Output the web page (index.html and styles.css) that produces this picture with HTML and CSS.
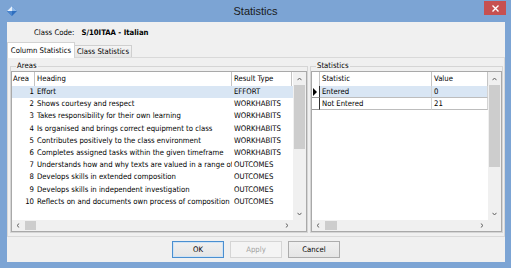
FILE: index.html
```html
<!DOCTYPE html>
<html>
<head>
<meta charset="utf-8">
<link rel="stylesheet" href="styles.css">
</head>
<body>
<div class="window">
  <div class="titlebar">
    <svg class="app-icon" viewBox="0 0 10 10" width="10" height="10">
      <polygon points="5,0 10,5 5,10 0,5" fill="#2f6fbf"/>
      <polygon points="5,0 0,5 5,5" fill="#e4eefa"/>
      <polygon points="5,0 10,5 5,5" fill="#8fb8e6"/>
      <polygon points="0,5 5,10 5,5" fill="#4a86cf"/>
    </svg>
    <div class="title">Statistics</div>
    <div class="close">
      <svg viewBox="0 0 7 7" width="7" height="7"><path d="M0.5 0.5 L6.5 6.5 M6.5 0.5 L0.5 6.5" stroke="#fff" stroke-width="1.4"/></svg>
    </div>
  </div>
  <div class="client">
    <div class="info"><span>Class Code:</span><span class="code">S/10ITAA - Italian</span></div>
    <div class="tabs">
      <div class="tab active">Column Statistics</div>
      <div class="tab inactive">Class Statistics</div>
    </div>
    <div class="panel">
      <fieldset class="group areas">
        <legend>Areas</legend>
        <div class="list">
          <div class="table">
            <div class="hdr acols"><div class="c num-h">Area</div><div class="c">Heading</div><div class="c">Result Type</div></div>
            <div class="row acols sel"><div class="c num">1</div><div class="c">Effort</div><div class="c">EFFORT</div></div>
            <div class="row acols"><div class="c num">2</div><div class="c">Shows courtesy and respect</div><div class="c">WORKHABITS</div></div>
            <div class="row acols"><div class="c num">3</div><div class="c">Takes responsibility for their own learning</div><div class="c">WORKHABITS</div></div>
            <div class="row acols"><div class="c num">4</div><div class="c">Is organised and brings correct equipment to class</div><div class="c">WORKHABITS</div></div>
            <div class="row acols"><div class="c num">5</div><div class="c">Contributes positively to the class environment</div><div class="c">WORKHABITS</div></div>
            <div class="row acols"><div class="c num">6</div><div class="c">Completes assigned tasks within the given timeframe</div><div class="c">WORKHABITS</div></div>
            <div class="row acols"><div class="c num">7</div><div class="c">Understands how and why texts are valued in a range of contexts</div><div class="c">OUTCOMES</div></div>
            <div class="row acols"><div class="c num">8</div><div class="c">Develops skills in extended composition</div><div class="c">OUTCOMES</div></div>
            <div class="row acols"><div class="c num">9</div><div class="c">Develops skills in independent investigation</div><div class="c">OUTCOMES</div></div>
            <div class="row acols"><div class="c num">10</div><div class="c">Reflects on and documents own process of composition</div><div class="c">OUTCOMES</div></div>
          </div>
          <div class="vscroll">
            <div class="arrow"><svg viewBox="0 0 5 4" width="5" height="4"><path d="M0.5 3.2 L2.5 1 L4.5 3.2" fill="none" stroke="#606060"/></svg></div>
            <div class="vthumb a-vthumb"></div>
            <div class="track"></div>
            <div class="arrow"><svg viewBox="0 0 5 4" width="5" height="4"><path d="M0.5 0.8 L2.5 3 L4.5 0.8" fill="none" stroke="#606060"/></svg></div>
          </div>
          <div class="hscroll">
            <div class="harrow"><svg viewBox="0 0 4 5" width="4" height="5"><path d="M3.2 0.5 L1 2.5 L3.2 4.5" fill="none" stroke="#606060"/></svg></div>
            <div class="hthumb"></div>
            <div class="track"></div>
            <div class="harrow"><svg viewBox="0 0 4 5" width="4" height="5"><path d="M0.8 0.5 L3 2.5 L0.8 4.5" fill="none" stroke="#606060"/></svg></div>
          </div>
          <div class="corner"></div>
        </div>
      </fieldset>
      <fieldset class="group stats">
        <legend>Statistics</legend>
        <div class="list">
          <div class="table">
            <div class="hdr scols"><div class="c rh"></div><div class="c">Statistic</div><div class="c">Value</div></div>
            <div class="srow scols sel"><div class="c rh"><svg viewBox="0 0 4 8" width="4" height="8"><polygon points="0,0 4,4 0,8" fill="#000"/></svg></div><div class="c">Entered</div><div class="c">0</div></div>
            <div class="srow scols"><div class="c rh"></div><div class="c">Not Entered</div><div class="c">21</div></div>
          </div>
          <div class="vscroll">
            <div class="arrow"><svg viewBox="0 0 5 4" width="5" height="4"><path d="M0.5 3.2 L2.5 1 L4.5 3.2" fill="none" stroke="#606060"/></svg></div>
            <div class="vthumb s-vthumb"></div>
            <div class="track"></div>
            <div class="arrow"><svg viewBox="0 0 5 4" width="5" height="4"><path d="M0.5 0.8 L2.5 3 L4.5 0.8" fill="none" stroke="#606060"/></svg></div>
          </div>
          <div class="hscroll">
            <div class="harrow"><svg viewBox="0 0 4 5" width="4" height="5"><path d="M3.2 0.5 L1 2.5 L3.2 4.5" fill="none" stroke="#606060"/></svg></div>
            <div class="hthumb s-hthumb"></div>
            <div class="track"></div>
            <div class="harrow"><svg viewBox="0 0 4 5" width="4" height="5"><path d="M0.8 0.5 L3 2.5 L0.8 4.5" fill="none" stroke="#606060"/></svg></div>
          </div>
          <div class="corner"></div>
        </div>
      </fieldset>
    </div>
    <div class="buttons">
      <div class="btn default">OK</div>
      <div class="btn disabled">Apply</div>
      <div class="btn">Cancel</div>
    </div>
  </div>
</div>
</body>
</html>
```
FILE: styles.css
```css
* { box-sizing: border-box; }
html, body { margin: 0; padding: 0; }
body {
  width: 511px;
  height: 268px;
  overflow: hidden;
  font-family: "DejaVu Sans Condensed", "Liberation Sans", Arial, sans-serif;
  font-size: 7.7px;
  color: #000;
}
.window {
  width: 511px;
  height: 268px;
  background: #7ca4d4;
  display: flex;
  flex-direction: column;
}
.titlebar {
  height: 22px;
  flex: none;
  display: grid;
  grid-template-columns: 1fr auto 1fr;
  align-items: start;
}
.app-icon { display: block; margin: 6px 0 0 7px; }
.title {
  font-family: "Liberation Sans", Arial, sans-serif;
  font-size: 11px;
  line-height: 22px;
  color: #1a1a1a;
}
.close {
  justify-self: end;
  margin: 1px 5px 0 0;
  width: 22px;
  height: 14px;
  background: #c75050;
  display: flex;
  align-items: center;
  justify-content: center;
}
.close svg { display: block; }
.client {
  margin-left: 7px;
  width: 498px;
  height: 240px;
  flex: none;
  background: #f0f0f0;
  display: flex;
  flex-direction: column;
}
.info {
  margin-top: 5px;
  height: 12px;
  line-height: 12px;
  padding-left: 27px;
  display: flex;
  gap: 7px;
}
.code { font-weight: bold; }
.tabs {
  margin-top: 3px;
  height: 15px;
  flex: none;
  display: flex;
  align-items: flex-end;
  position: relative;
  z-index: 1;
}
.tab {
  height: 12px;
  line-height: 11px;
  text-align: center;
  border: 1px solid #cfcfcf;
  border-bottom: none;
  background: linear-gradient(#f4f4f4, #e6e6e6);
  white-space: nowrap;
}
.tab.active {
  width: 68px;
  height: 16px;
  line-height: 15px;
  margin-bottom: -1px;
  background: #fff;
  border-color: #d3d3d3;
}
.tab.inactive { width: 57px; border-left: none; }
.panel {
  height: 180px;
  flex: none;
  border: 1px solid #d9d9d9;
  background: #f0f0f0;
  padding: 3px 1px 3px 2px;
  display: flex;
  gap: 2px;
}
.group {
  margin: 0;
  padding: 0;
  min-width: 0;
  height: 172px;
  border: 1px solid #d5d5d5;
}
.group legend {
  margin-left: 5px;
  padding: 0 1px;
  height: 10px;
  line-height: 10px;
}
.areas { width: 298px; }
.stats { width: 193px; }
.list {
  height: 161px;
  border: 1px solid #a9a9a9;
  background: #fff;
  display: grid;
  grid-template-columns: 1fr 13px;
  grid-template-rows: 1fr 11px;
}
.table { overflow: hidden; }
.acols { display: grid; grid-template-columns: 23px 197px 60px; }
.scols { display: grid; grid-template-columns: 8px 112px 56px; }
.c {
  overflow: hidden;
  white-space: nowrap;
  padding-left: 2px;
}
.hdr { height: 14px; line-height: 14px; }
.hdr .c { border-right: 1px solid #c4c4c4; }
.hdr .num-h { padding-left: 1px; }
.row { height: 12.2px; line-height: 12px; }
.row .num { text-align: right; padding: 0 1px 0 0; }
.sel { background: #d9e6f4; }
.srow { height: 12px; line-height: 11px; }
.srow .c { border-right: 1px solid #d4d4d4; border-bottom: 1px solid #bdbdbd; }
.srow.sel { background: transparent; }
.srow.sel .c { background: #d9e6f4; }
.srow .rh, .srow.sel .rh {
  background: #fff;
  border-right: 1px solid #303030;
  border-bottom: 1px solid #9a9a9a;
  padding-left: 1px;
  display: flex;
  align-items: center;
}
.rh svg { display: block; }
.vscroll {
  background: #f0f0f0;
  display: flex;
  flex-direction: column;
}
.arrow {
  height: 13px;
  flex: none;
  display: flex;
  align-items: center;
  justify-content: center;
}
.arrow svg, .harrow svg { display: block; }
.vthumb { margin: 0 1px; background: #cdcdcd; flex: none; }
.a-vthumb { height: 64px; }
.s-vthumb { height: 82px; }
.track { flex: 1; }
.hscroll {
  background: #f0f0f0;
  display: flex;
}
.harrow {
  width: 12px;
  flex: none;
  display: flex;
  align-items: center;
  justify-content: center;
}
.hthumb { width: 11px; margin: 1px 0 1px 1px; background: #cdcdcd; flex: none; }
.s-hthumb { width: 12px; }
.corner { background: #f0f0f0; }
.buttons {
  margin-top: 4px;
  display: flex;
  justify-content: center;
  gap: 6px;
}
.btn {
  width: 52px;
  height: 17px;
  line-height: 15px;
  text-align: center;
  border: 1px solid #acacac;
  background: linear-gradient(#f0f0f0, #e5e5e5);
}
.btn.default { border-color: #4a8fd0; box-shadow: inset 0 0 0 1px #cfe3f5; }
.btn.disabled { color: #a3a3a3; border-color: #d5d5d5; background: #f4f4f4; }
```
